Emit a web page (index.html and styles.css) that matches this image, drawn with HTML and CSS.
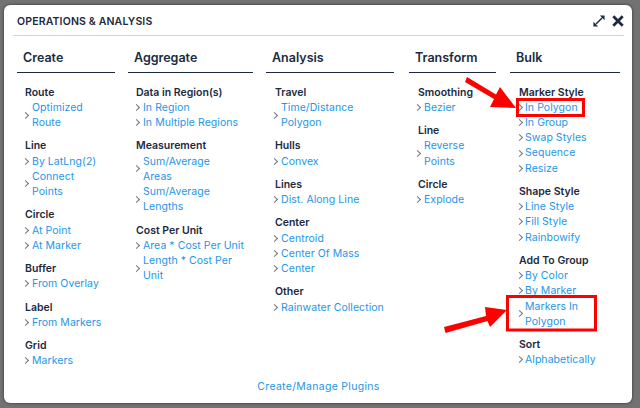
FILE: index.html
```html
<!DOCTYPE html>
<html lang="en">
<head>
  <meta charset="UTF-8" />
  <title>Operations &amp; Analysis</title>
  <link rel="stylesheet" href="styles.css">
</head>
<body>

<div class="modal">
  <div class="modal-header">
    <h1>OPERATIONS &amp; ANALYSIS</h1>
    <div class="modal-tools">
      <svg class="tool-icon" viewBox="0 0 14 14" fill="#1b2a41" stroke="#1b2a41" stroke-width="0">
        <path d="M8 0.500h5.500V6z"/>
        <path d="M0.500 8v5.500H6z"/>
        <path d="M3.500 10.500l7-7" stroke-width="1.700"/>
      </svg>
      <svg class="tool-icon" viewBox="0 0 14 14" stroke="#1b2a41" stroke-width="3.200" fill="none">
        <path d="M1.500 1.500l11 11M12.500 1.500l-11 11"/>
      </svg>
    </div>
  </div>

  <div class="columns">
    <div class="col col-create">
      <h2>Create</h2>
      <div class="group">
        <h3>Route</h3>
        <a class="item"><span class="chev"></span><span class="label">Optimized<br>Route</span></a>
      </div>
      <div class="group">
        <h3>Line</h3>
        <a class="item"><span class="chev"></span><span class="label">By LatLng(2)</span></a>
        <a class="item"><span class="chev"></span><span class="label">Connect<br>Points</span></a>
      </div>
      <div class="group">
        <h3>Circle</h3>
        <a class="item"><span class="chev"></span><span class="label">At Point</span></a>
        <a class="item"><span class="chev"></span><span class="label">At Marker</span></a>
      </div>
      <div class="group">
        <h3>Buffer</h3>
        <a class="item"><span class="chev"></span><span class="label">From Overlay</span></a>
      </div>
      <div class="group">
        <h3>Label</h3>
        <a class="item"><span class="chev"></span><span class="label">From Markers</span></a>
      </div>
      <div class="group">
        <h3>Grid</h3>
        <a class="item"><span class="chev"></span><span class="label">Markers</span></a>
      </div>
    </div>

    <div class="col col-aggregate">
      <h2>Aggregate</h2>
      <div class="group">
        <h3>Data in Region(s)</h3>
        <a class="item"><span class="chev"></span><span class="label">In Region</span></a>
        <a class="item"><span class="chev"></span><span class="label">In Multiple Regions</span></a>
      </div>
      <div class="group">
        <h3>Measurement</h3>
        <a class="item"><span class="chev"></span><span class="label">Sum/Average<br>Areas</span></a>
        <a class="item"><span class="chev"></span><span class="label">Sum/Average<br>Lengths</span></a>
      </div>
      <div class="group">
        <h3>Cost Per Unit</h3>
        <a class="item"><span class="chev"></span><span class="label">Area * Cost Per Unit</span></a>
        <a class="item"><span class="chev"></span><span class="label">Length * Cost Per<br>Unit</span></a>
      </div>
    </div>

    <div class="col col-analysis">
      <h2>Analysis</h2>
      <div class="group">
        <h3>Travel</h3>
        <a class="item"><span class="chev"></span><span class="label">Time/Distance<br>Polygon</span></a>
      </div>
      <div class="group">
        <h3>Hulls</h3>
        <a class="item"><span class="chev"></span><span class="label">Convex</span></a>
      </div>
      <div class="group">
        <h3>Lines</h3>
        <a class="item"><span class="chev"></span><span class="label">Dist. Along Line</span></a>
      </div>
      <div class="group">
        <h3>Center</h3>
        <a class="item"><span class="chev"></span><span class="label">Centroid</span></a>
        <a class="item"><span class="chev"></span><span class="label">Center Of Mass</span></a>
        <a class="item"><span class="chev"></span><span class="label">Center</span></a>
      </div>
      <div class="group">
        <h3>Other</h3>
        <a class="item"><span class="chev"></span><span class="label">Rainwater Collection</span></a>
      </div>
    </div>

    <div class="col col-transform">
      <h2>Transform</h2>
      <div class="group">
        <h3>Smoothing</h3>
        <a class="item"><span class="chev"></span><span class="label">Bezier</span></a>
      </div>
      <div class="group">
        <h3>Line</h3>
        <a class="item"><span class="chev"></span><span class="label">Reverse<br>Points</span></a>
      </div>
      <div class="group">
        <h3>Circle</h3>
        <a class="item"><span class="chev"></span><span class="label">Explode</span></a>
      </div>
    </div>

    <div class="col col-bulk">
      <h2>Bulk</h2>
      <div class="group">
        <h3>Marker Style</h3>
        <a class="item"><span class="chev"></span><span class="label">In Polygon</span></a>
        <a class="item"><span class="chev"></span><span class="label">In Group</span></a>
        <a class="item"><span class="chev"></span><span class="label">Swap Styles</span></a>
        <a class="item"><span class="chev"></span><span class="label">Sequence</span></a>
        <a class="item"><span class="chev"></span><span class="label">Resize</span></a>
      </div>
      <div class="group">
        <h3>Shape Style</h3>
        <a class="item"><span class="chev"></span><span class="label">Line Style</span></a>
        <a class="item"><span class="chev"></span><span class="label">Fill Style</span></a>
        <a class="item"><span class="chev"></span><span class="label">Rainbowify</span></a>
      </div>
      <div class="group">
        <h3>Add To Group</h3>
        <a class="item"><span class="chev"></span><span class="label">By Color</span></a>
        <a class="item"><span class="chev"></span><span class="label">By Marker</span></a>
        <a class="item"><span class="chev"></span><span class="label">Markers In<br>Polygon</span></a>
      </div>
      <div class="group">
        <h3>Sort</h3>
        <a class="item"><span class="chev"></span><span class="label">Alphabetically</span></a>
      </div>
    </div>
  </div>

  <a class="plugins">Create/Manage Plugins</a>
</div>

<!-- red boxes and arrows drawn on top of the screenshot -->
<svg class="notes" viewBox="0 0 640 408">
  <rect class="note-box" x="517.500" y="99.500" width="66" height="16"/>
  <rect class="note-box" x="507.500" y="296.500" width="88" height="33.500"/>
  <path class="note-arrow" d="M467 77l29 17.500 4-7.500 16 21-26-1 4-8-29-17z"/>
  <path class="note-arrow" d="M444 327l42-11-1-9 22 3-17 17-2.500-6-42 12z"/>
</svg>

</body>
</html>
```

FILE: styles.css
```css
* {
  box-sizing: border-box;
  margin: 0;
  padding: 0;
}

body {
  width: 640px;
  height: 408px;
  overflow: hidden;
  position: relative;
  padding: 5px 8px 5px 4px;
  background: #717271;
  font-family: 'Inter', 'Open Sans', sans-serif;
}

.modal {
  height: 398px;
  padding: 0 8px 0 9px;
  background: #fff;
  border-radius: 6px;
  box-shadow: 0 0 3px rgba(0, 0, 0, 0.6);
  display: flex;
  flex-direction: column;
}

.modal-header {
  height: 31px;
  flex: none;
  border-bottom: 1px solid #d5d5d5;
  display: flex;
  align-items: center;
  justify-content: space-between;
  padding: 2px 0 0 4px;
}

h1 {
  font-size: 10.5px;
  font-weight: 600;
  letter-spacing: 0.15px;
  color: #1b2a41;
}

.modal-tools {
  display: flex;
  align-items: center;
  gap: 7px;
}

.tool-icon {
  width: 12px;
  height: 12px;
}

.columns {
  display: flex;
  padding: 13px 0 0 4px;
  flex: 1;
}

.col-create { width: 98px; margin-right: 13px; }
.col-aggregate { width: 125px; margin-right: 13px; }
.col-analysis { width: 128px; margin-right: 15px; }
.col-transform { width: 87px; margin-right: 14px; }
.col-bulk { width: 110px; }

h2 {
  font-size: 12.500px;
  font-weight: 600;
  line-height: 18px;
  height: 24px;
  padding-left: 6px;
  margin-bottom: 11.600px;
  color: #1b2a41;
  border-bottom: 1px solid #1b2a41;
}

.group {
  padding-left: 8px;
  margin-bottom: 8.150px;
}

.col-analysis .group,
.col-transform .group {
  padding-left: 9px;
}

.col-analysis .item,
.col-transform .item {
  margin-left: -1px;
}

.col-bulk .group {
  padding-left: 9px;
}

h3 {
  font-size: 10.5px;
  font-weight: 600;
  line-height: 15.200px;
  color: #1b2a41;
}

.item {
  display: flex;
  align-items: center;
  gap: 4px;
  font-size: 10.5px;
  line-height: 15.200px;
  letter-spacing: 0.05px;
  color: #1e96e8;
}

.col-bulk .item {
  gap: 3px;
}

.chev {
  flex: none;
  width: 3px;
  height: 5px;
  position: relative;
}

.chev::before {
  content: "";
  position: absolute;
  left: -2px;
  top: 0;
  width: 4px;
  height: 4px;
  border-top: 1px solid #70757d;
  border-right: 1px solid #70757d;
  transform: rotate(45deg);
}

.plugins {
  text-align: center;
  font-size: 10.5px;
  letter-spacing: 0.3px;
  color: #1e96e8;
  padding-bottom: 10px;
}

.notes {
  position: absolute;
  left: 0;
  top: 0;
  width: 640px;
  height: 408px;
}

.note-box {
  fill: none;
  stroke: #fe0000;
  stroke-width: 3px;
}

.note-arrow {
  fill: #fe0000;
}
```
